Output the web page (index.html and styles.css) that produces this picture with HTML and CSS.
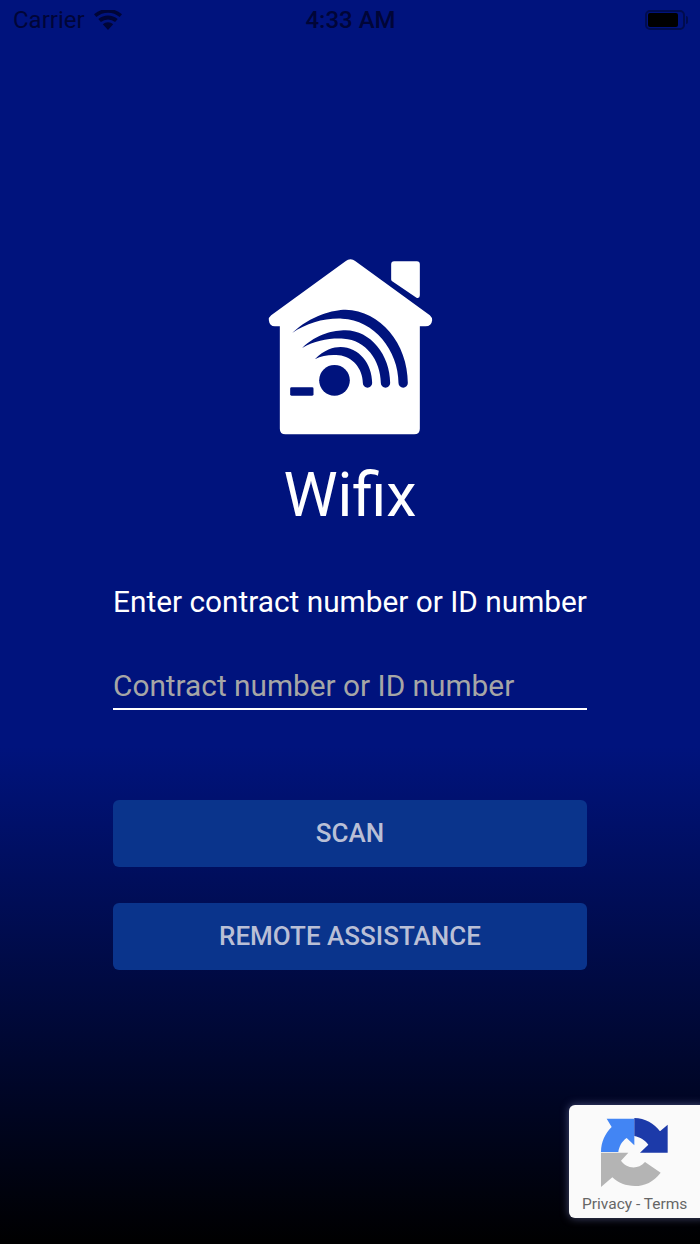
FILE: index.html
```html
<!DOCTYPE html>
<html lang="en">
<head>
<meta charset="utf-8">
<title>Wifix</title>
<link rel="stylesheet" href="styles.css">
</head>
<body>
<main class="screen">
  <header class="status">
    <div class="status-left">
      <span>Carrier</span>
      <svg class="wifi" viewBox="0 0 28 20"><path d="M14 20 8.800 14.200a7.600 7.600 0 0 1 10.400 0ZM6.900 12 4.300 9.100a14.800 14.800 0 0 1 19.400 0L21.100 12a11 11 0 0 0-14.200 0ZM2.400 7 0 4.300a21.200 21.200 0 0 1 28 0L25.600 7a17.600 17.600 0 0 0-23.200 0Z"/></svg>
    </div>
    <span class="clock">4:33 AM</span>
    <div class="battery"><span class="battery-fill"></span></div>
  </header>
  <section class="content">
    <svg class="logo" viewBox="50 20 500 540">
      <path class="logo-white" d="M300 27q-8 0-14 5L62 195q-8 6-7 15 2 18 18 18H88V535q0 17 17 17H491q17 0 17-17V228h17q18 0 20-18 0-9-7-15L314 32q-6-5-14-5ZM422 42q0-9 9-9h68q9 0 9 9v93q0 10-10 7L424 92q-2-2-2-5Z"/>
      <path class="logo-blue" d="M125 248C180 195 250 178 285 178 390 180 472 280 472 398a14 14 0 0 1-28 0C444 300 370 208 275 205 220 203 170 218 125 248ZM155 293C200 250 250 240 285 240 360 240 419 315 419 398a14 14 0 0 1-28 0C391 330 345 268 280 265 235 263 195 270 155 293ZM193 327C220 298 250 290 270 290 325 290 365 340 365 398a14 14 0 0 1-28 0C337 355 305 318 265 315 240 313 215 315 193 327Z"/>
      <circle class="logo-blue" cx="252" cy="390" r="46"/>
      <rect class="logo-blue" x="119" y="411" width="70" height="25" rx="4"/>
    </svg>
    <h1 class="title">Wifix</h1>
    <p class="label">Enter contract number or ID number</p>
    <input class="field" type="text" placeholder="Contract number or ID number">
    <button class="action action-scan" type="button">SCAN</button>
    <button class="action" type="button">REMOTE ASSISTANCE</button>
  </section>
  <aside class="badge">
    <svg class="captcha" viewBox="0 0 240 240">
      <path class="c-grey" d="M18 122H100L78 146C90 165 125 178 150 150L197 182C175 210 150 222 120 222 92 222 70 213 52 196L18 225Z"/>
      <path class="c-light" d="M18 120C18 90 30 65 50 45L35 20H118V100L95 78C80 88 72 105 70 120Z"/>
      <path class="c-dark" d="M118 18C150 18 178 35 195 58L218 38V122H135L160 98C150 85 135 75 118 72Z"/>
    </svg>
    <span class="badge-text">Privacy - Terms</span>
  </aside>
</main>
</body>
</html>
```
FILE: styles.css
```css
* { box-sizing: border-box; }
html, body { margin: 0; height: 100%; }
body { font-family: Roboto, "Liberation Sans", sans-serif; }
.screen {
  position: relative;
  width: 700px;
  height: 1244px;
  overflow: hidden;
  background: linear-gradient(180deg, #00137d 0%, #00137d 60%, #000 100%);
  display: flex;
  flex-direction: column;
}
.status {
  height: 40px;
  padding: 0 12px 1px 13px;
  display: grid;
  grid-template-columns: 1fr auto 1fr;
  align-items: center;
  color: #000537;
  font-size: 24px;
}
.status-left { display: flex; align-items: center; gap: 9px; }
.wifi { width: 28px; height: 20px; fill: #000537; }
.clock { font-weight: 500; }
.battery {
  position: relative;
  justify-self: end;
  width: 40px;
  height: 20px;
  margin-right: 3px;
  border: 2px solid #000c4f;
  border-radius: 5px;
  padding: 1px;
}
.battery::after {
  content: "";
  position: absolute;
  right: -5px;
  top: 4px;
  width: 2px;
  height: 8px;
  background: #000c4f;
  border-radius: 0 2px 2px 0;
}
.battery-fill { display: block; width: 30px; height: 14px; background: #000; border-radius: 2px; }
.content {
  display: flex;
  flex-direction: column;
  align-items: center;
  padding: 217px 113px 0;
}
.logo { width: 167px; height: 180px; }
.logo-white { fill: #fff; fill-rule: evenodd; }
.logo-blue { fill: #00137d; }
.title {
  margin: 21px 0 0;
  font-size: 61px;
  line-height: 75px;
  font-weight: 400;
  color: #fff;
}
.label {
  margin: 51px 0 0;
  font-size: 29.8px;
  line-height: 36px;
  color: #fff;
  white-space: nowrap;
}
.field {
  width: 100%;
  height: 49px;
  margin-top: 41px;
  padding: 2px 0 0;
  background: transparent;
  border: 0;
  border-bottom: 2px solid #fff;
  color: #fff;
  font: 400 29.8px Roboto, sans-serif;
}
.field::placeholder { color: #a6a6a6; opacity: 1; }
.action {
  width: 100%;
  height: 67px;
  padding: 0 0 2px;
  border: 0;
  border-radius: 6px;
  background: #0a348c;
  color: #b9bfd6;
  font: 500 26px Roboto, sans-serif;
  margin-top: 36px;
}
.action-scan { margin-top: 90px; }
.badge {
  position: absolute;
  left: 569px;
  top: 1105px;
  width: 140px;
  height: 113px;
  background: #fafafa;
  border-radius: 6px;
  box-shadow: 0 0 8px rgba(130, 140, 200, .55);
}
.captcha { position: absolute; left: 26px; top: 7px; width: 80px; height: 80px; }
.c-grey { fill: #b4b4b4; }
.c-light { fill: #4285f4; }
.c-dark { fill: #1c3aa9; }
.badge-text {
  position: absolute;
  left: 13px;
  top: 89px;
  font-size: 15.5px;
  line-height: 20px;
  color: #666;
  white-space: nowrap;
}
```
